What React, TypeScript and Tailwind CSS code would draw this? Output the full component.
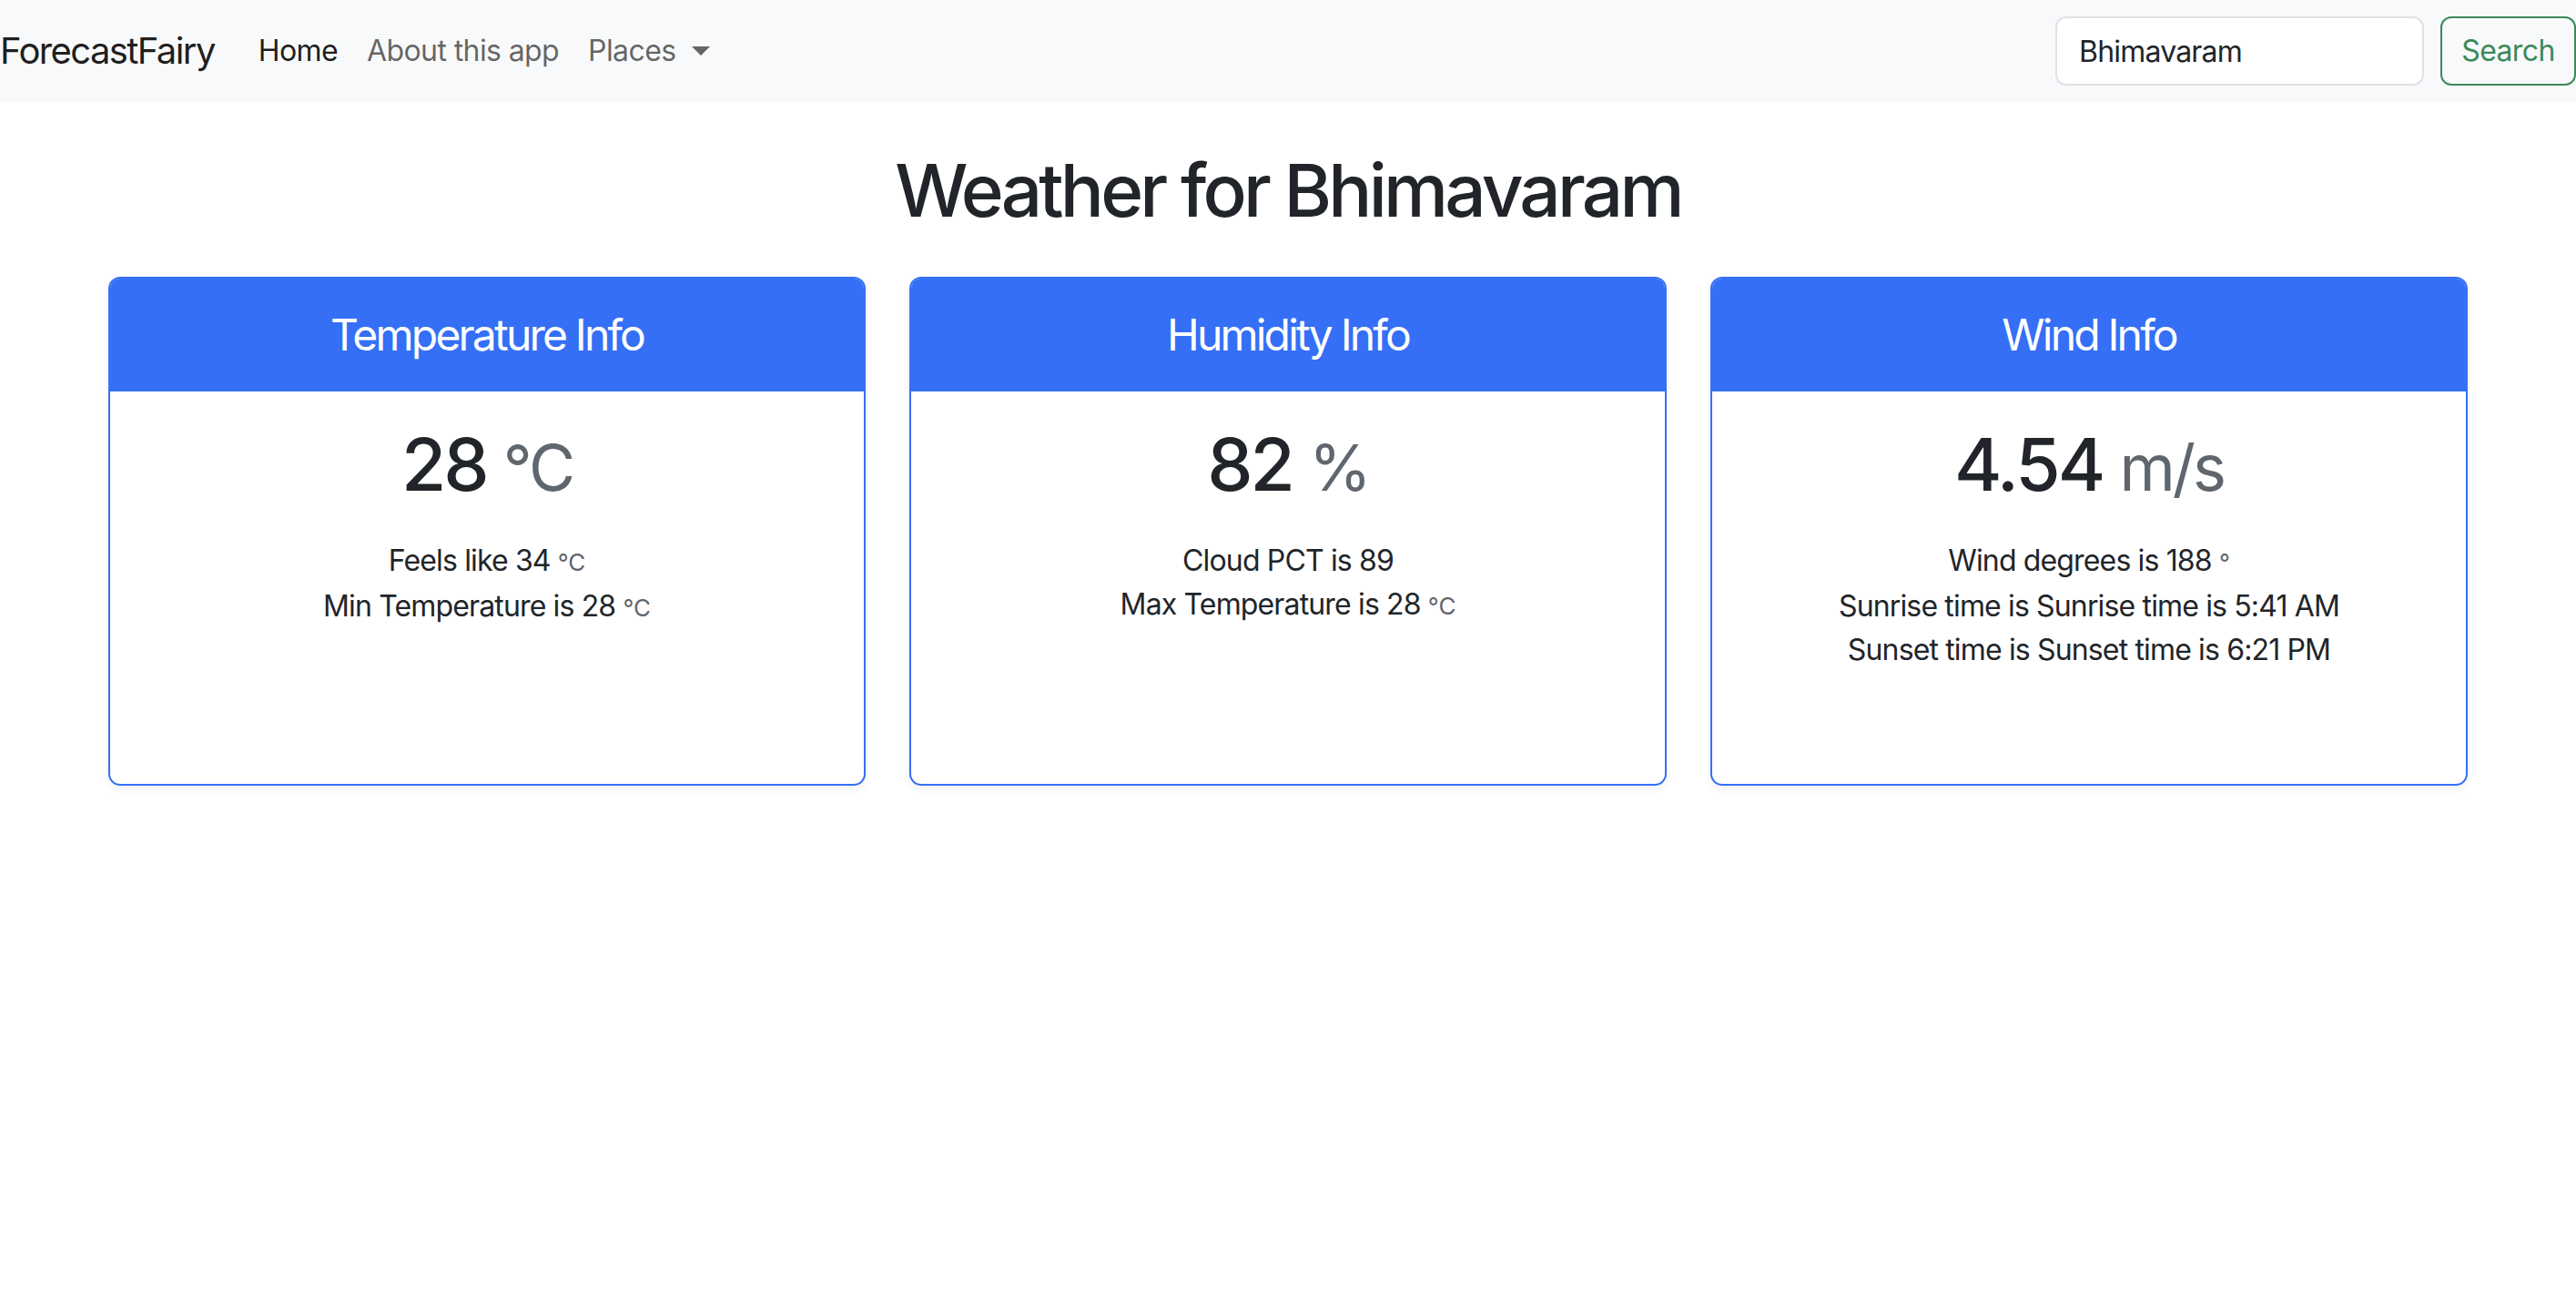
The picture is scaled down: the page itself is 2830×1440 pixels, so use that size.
import React from "react";

const font = { fontFamily: "Inter, 'Noto Sans', 'Liberation Sans', sans-serif" };

function Card({
  title,
  value,
  unit,
  lines,
}: {
  title: string;
  value: string;
  unit: string;
  lines: React.ReactNode[];
}) {
  return (
    <div className="h-[559px] rounded-[13px] border-2 border-[#356ff6] overflow-hidden bg-white shadow-[0_4px_10px_rgba(0,0,0,0.06)]">
      <div className="h-[124px] bg-[#356ff6] flex items-center justify-center text-white text-[48px] leading-[58px] font-normal tracking-[-2.8px]">
        {title}
      </div>
      <div className="pt-[32px] px-[32px] text-center text-[#212529]">
        <div className="text-[80px] leading-[96px] font-medium tracking-[-3px]">
          {value}{" "}
          <span className="text-[70px] font-normal text-[#5f666d]">{unit}</span>
        </div>
        <div className="mt-[30px] text-[32px] leading-[48px] tracking-[-0.85px]">
          {lines.map((l, i) => (
            <div key={i}>{l}</div>
          ))}
        </div>
      </div>
    </div>
  );
}

const Small = ({ children }: { children: React.ReactNode }) => (
  <span className="text-[26px] text-[#5f666d] tracking-normal">{children}</span>
);

export default function App() {
  return (
    <div style={font} className="min-h-[1440px] bg-white text-[#212529]">
      <nav className="h-[112px] bg-[#f8f9fa] flex items-center justify-between">
        <div className="flex items-center">
          <span className="text-[40px] leading-[60px] text-black/90 mr-[32px] tracking-[-1.6px]">
            ForecastFairy
          </span>
          <a className="px-[16px] text-[32px] leading-[48px] text-black/90 tracking-[-0.6px]">Home</a>
          <a className="px-[16px] text-[32px] leading-[48px] text-black/60 tracking-[-0.6px]">About this app</a>
          <a className="px-[16px] text-[32px] leading-[48px] text-black/60 tracking-[-0.6px] flex items-center">
            Places
            <span className="ml-[17px] w-0 h-0 border-l-[10px] border-r-[10px] border-t-[10px] border-l-transparent border-r-transparent border-t-black/60"></span>
          </a>
        </div>
        <div className="flex items-center">
          <input
            readOnly
            value="Bhimavaram"
            className="w-[405px] h-[76px] bg-white border-2 border-[#dee2e6] rounded-[12px] px-[24px] text-[32px] text-[#212529] tracking-[-0.8px] outline-none"
            style={font}
          />
          <button
            className="ml-[18px] w-[149px] h-[76px] flex items-center justify-center border-2 border-[#3b8a5a] rounded-[12px] text-[#3b8a5a] text-[32px] tracking-[-0.6px]"
            style={font}
          >
            Search
          </button>
        </div>
      </nav>

      <h1 className="mt-[49px] mb-[47px] text-center text-[80px] leading-[96px] font-medium tracking-[-3.8px]">
        Weather for Bhimavaram
      </h1>

      <div className="mx-auto w-[2592px] grid grid-cols-3 gap-[48px]">
        <Card
          title="Temperature Info"
          value="28"
          unit="°C"
          lines={[
            <>Feels like 34 <Small>°C</Small></>,
            <>Min Temperature is 28 <Small>°C</Small></>,
          ]}
        />
        <Card
          title="Humidity Info"
          value="82"
          unit="%"
          lines={[
            <>Cloud PCT is 89</>,
            <>Max Temperature is 28 <Small>°C</Small></>,
          ]}
        />
        <Card
          title="Wind Info"
          value="4.54"
          unit="m/s"
          lines={[
            <>Wind degrees is 188 <Small>°</Small></>,
            <>Sunrise time is Sunrise time is 5:41 AM</>,
            <>Sunset time is Sunset time is 6:21 PM</>,
          ]}
        />
      </div>
    </div>
  );
}
